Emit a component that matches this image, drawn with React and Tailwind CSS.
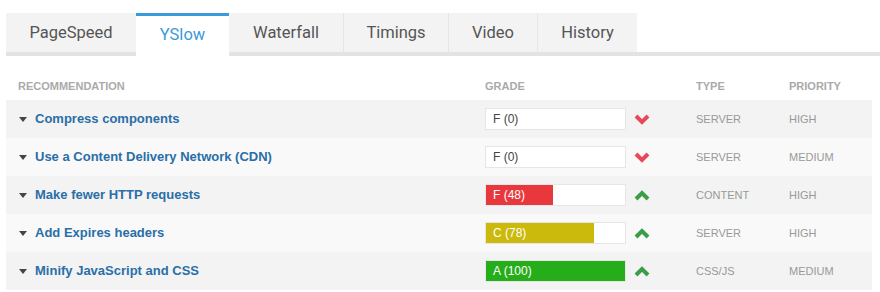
import React from "react";

const tabs = [
  { label: "PageSpeed", w: "w-[130px]" },
  { label: "YSlow", w: "w-[93px]", active: true },
  { label: "Waterfall", w: "w-[114px]" },
  { label: "Timings", w: "w-[105px]", sep: true },
  { label: "Video", w: "w-[89px]", sep: true },
  { label: "History", w: "w-[100px]", sep: true },
];

const rows = [
  { name: "Compress components", grade: "F (0)", score: 0, bar: "", good: false, type: "SERVER", priority: "HIGH" },
  { name: "Use a Content Delivery Network (CDN)", grade: "F (0)", score: 0, bar: "", good: false, type: "SERVER", priority: "MEDIUM" },
  { name: "Make fewer HTTP requests", grade: "F (48)", score: 48, bar: "bg-[#e8383d]", good: true, type: "CONTENT", priority: "HIGH" },
  { name: "Add Expires headers", grade: "C (78)", score: 78, bar: "bg-[#cbb90b]", good: true, type: "SERVER", priority: "HIGH" },
  { name: "Minify JavaScript and CSS", grade: "A (100)", score: 100, bar: "bg-[#26ad1a]", good: true, type: "CSS/JS", priority: "MEDIUM" },
];

const Chevron = ({ up }) => (
  <svg width="16" height="11" viewBox="0 0 16 11">
    {up ? (
      <polyline points="2,9 8,3 14,9" fill="none" stroke="#3a9e48" strokeWidth="4" />
    ) : (
      <polyline points="2,2 8,8 14,2" fill="none" stroke="#e8485a" strokeWidth="4" />
    )}
  </svg>
);

const App = () => {
  return (
    <div className="w-[880px] h-[292px] bg-white pl-[6px] pt-[13px] font-['Liberation_Sans',Arial,sans-serif]">
      {/* Tabs */}
      <div className="flex">
        {tabs.map((t) =>
          t.active ? (
            <div
              key={t.label}
              className={`${t.w} h-[43px] bg-white border-t-[3px] border-[#3b9ad9] flex items-center justify-center pb-[1px] text-[16.5px] text-[#3b9ad9] font-['Roboto',sans-serif]`}
            >
              {t.label}
            </div>
          ) : (
            <div
              key={t.label}
              className={`${t.w} h-[43px] bg-[#f3f3f3] border-b-4 border-b-[#e3e3e3] flex items-center justify-center pt-[2px] text-[16.5px] text-[#555] font-['Roboto',sans-serif] ${t.sep ? "border-l border-l-[#e6e6e6]" : ""}`}
            >
              {t.label}
            </div>
          )
        )}
        <div className="flex-1 h-[43px] border-b-4 border-b-[#e3e3e3]" />
      </div>

      {/* Table */}
      <div className="w-[866px] mt-[21px]">
        <div className="grid grid-cols-[479px_211px_93px_1fr] h-[23px] pt-[4px] text-[11px] font-bold text-[#aaa] leading-none">
          <div className="pl-3">RECOMMENDATION</div>
          <div>GRADE</div>
          <div>TYPE</div>
          <div>PRIORITY</div>
        </div>
        {rows.map((r, i) => (
          <div
            key={r.name}
            className={`grid grid-cols-[479px_211px_93px_1fr] items-center h-[38px] ${i % 2 === 0 ? "bg-[#f3f3f3]" : "bg-[#f9f9f9]"}`}
          >
            <div className="flex items-center pl-3">
              <span className="w-0 h-0 border-l-[4px] border-r-[4px] border-t-[5px] border-l-transparent border-r-transparent border-t-[#444] mr-[8px] ml-[1px]" />
              <span className="text-[13px] font-bold text-[#2a6ea8]">{r.name}</span>
            </div>
            <div className="flex items-center">
              <div className="relative w-[141px] h-[22px] bg-white border border-[#e6e6e6]">
                {r.score > 0 && (
                  <div className={`absolute left-0 top-0 bottom-0 ${r.bar}`} style={{ width: `${r.score}%` }} />
                )}
                <span
                  className={`relative flex items-center h-full pl-[7px] text-[12px] ${r.score > 0 ? "text-white" : "text-[#444]"}`}
                >
                  {r.grade}
                </span>
              </div>
              <div className="ml-[8px] flex items-center">
                <Chevron up={r.good} />
              </div>
            </div>
            <div className="text-[11px] text-[#999]">{r.type}</div>
            <div className="text-[11px] text-[#999]">{r.priority}</div>
          </div>
        ))}
      </div>
    </div>
  );
};

export default App;
